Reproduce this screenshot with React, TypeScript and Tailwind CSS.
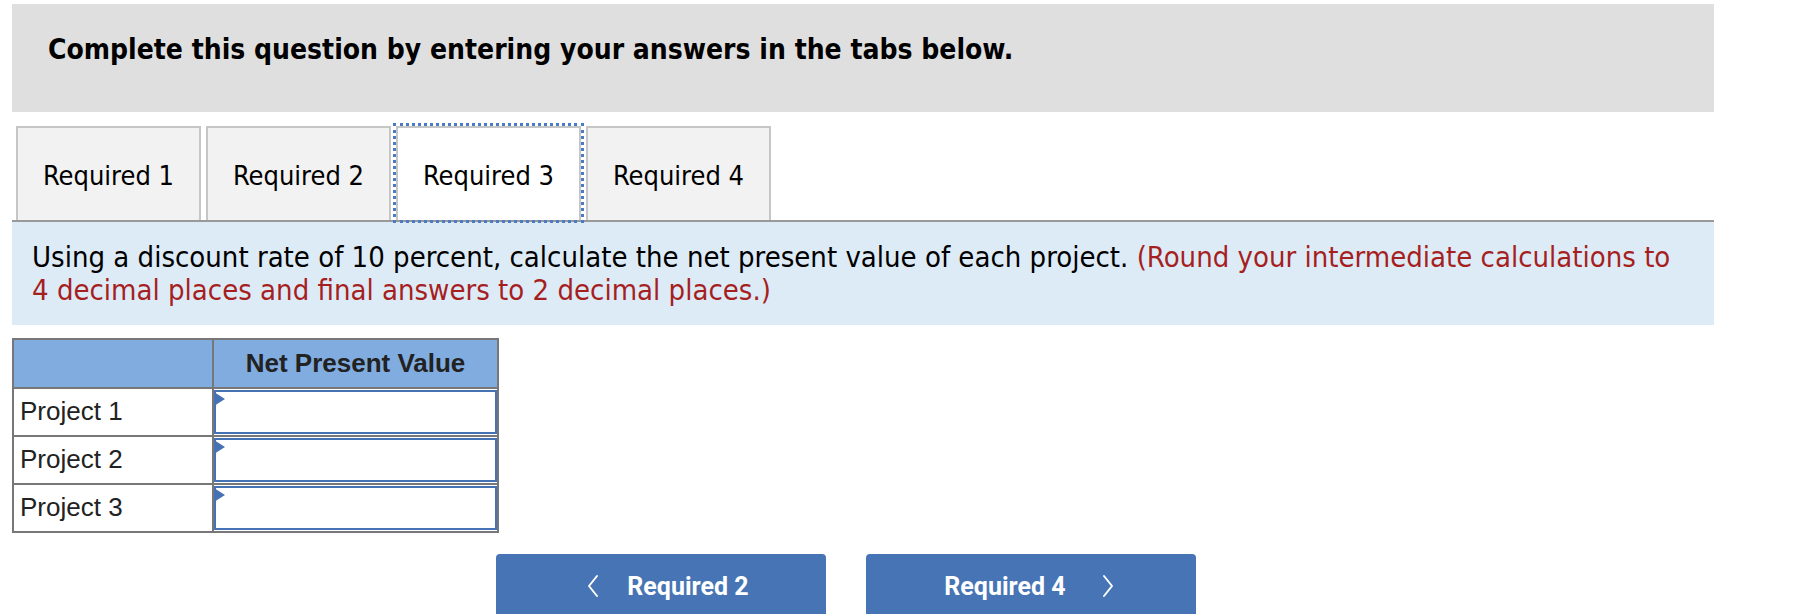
import React from 'react';

const tabs = ['Required 1', 'Required 2', 'Required 3', 'Required 4'];
const projects = ['Project 1', 'Project 2', 'Project 3'];

function Chevron({ dir }: { dir: 'left' | 'right' }) {
  return (
    <svg width="12" height="24" viewBox="0 0 12 24" fill="none" stroke="white" strokeWidth="2" strokeLinecap="round" strokeLinejoin="round">
      {dir === 'left' ? <polyline points="10,2 2,12 10,22" /> : <polyline points="2,2 10,12 2,22" />}
    </svg>
  );
}

export default function App() {
  const active = 2;

  return (
    <div className="w-[1810px] h-[614px] overflow-hidden bg-white pl-3 pr-[96px] font-['DejaVu_Sans_Condensed','DejaVu_Sans',sans-serif]">
      {/* instructions banner */}
      <div className="mt-1 h-[108px] bg-[#dfdfdf] pl-[36px] pt-[28px]">
        <h2 className="text-[28px] leading-[36px] font-bold text-black">
          Complete this question by entering your answers in the tabs below.
        </h2>
      </div>

      {/* tabs */}
      <div className="mt-[14px] flex gap-[5px] pl-1">
        {tabs.map((t, i) => (
          <div
            key={t}
            className={`w-[185px] h-[94px] flex items-center justify-center pt-[4px] border-2 border-b-0 text-[27px] text-black ${
              i === active
                ? 'relative z-10 bg-white border-[#c6c6c6] outline-[3px] outline-dotted outline-[#4a7bc4] outline-offset-0'
                : 'bg-[#f2f2f2] border-[#c6c6c6]'
            }`}
          >
            {t}
          </div>
        ))}
      </div>
      <div className="h-[2px] bg-[#999999]" />

      {/* question */}
      <div className="bg-[#ddebf7] px-5 pt-[19px] pb-[18px] text-[29px] leading-[33px] text-black">
        Using a discount rate of 10 percent, calculate the net present value of each project.{' '}
        <span className="text-[#a61f1f]">
          (Round your intermediate calculations to 4 decimal places and final answers to 2 decimal places.)
        </span>
      </div>

      {/* answer table */}
      <table className="mt-[13px] border-collapse font-['Liberation_Sans',Arial,sans-serif] text-[26px] text-[#222]">
        <thead>
          <tr className="bg-[#80acdf]">
            <th className="w-[200px] h-[49px] border-2 border-[#777777]" />
            <th className="w-[285px] h-[49px] border-2 border-[#777777] font-bold text-center">Net Present Value</th>
          </tr>
        </thead>
        <tbody>
          {projects.map((p) => (
            <tr key={p}>
              <td className="h-[48px] border-2 border-[#777777] pl-[6px] pb-[2px] text-left">{p}</td>
              <td className="h-[48px] border-2 border-[#777777] p-0">
                <div className="relative h-[44px] border-2 border-[#4472b4] bg-white">
                  <span className="absolute left-[-2px] top-0 w-0 h-0 border-t-[7px] border-b-[7px] border-l-[11px] border-t-transparent border-b-transparent border-l-[#4472b4]" />
                </div>
              </td>
            </tr>
          ))}
        </tbody>
      </table>

      {/* navigation */}
      <div className="mt-[21px] flex gap-[40px] pl-[484px] font-['Roboto',sans-serif]">
        <button className="w-[330px] h-[66px] rounded-t-[4px] bg-[#4674b5] text-white flex items-start justify-center pt-[18px] pl-[14px] gap-[28px]">
          <span className="pt-[2px]"><Chevron dir="left" /></span>
          <span className="text-[25px] font-bold leading-[30px]">Required 2</span>
        </button>
        <button className="w-[330px] h-[66px] rounded-t-[4px] bg-[#4674b5] text-white flex items-start justify-center pt-[18px] pr-[4px] gap-[36px]">
          <span className="text-[25px] font-bold leading-[30px]">Required 4</span>
          <span className="pt-[2px]"><Chevron dir="right" /></span>
        </button>
      </div>
    </div>
  );
}
